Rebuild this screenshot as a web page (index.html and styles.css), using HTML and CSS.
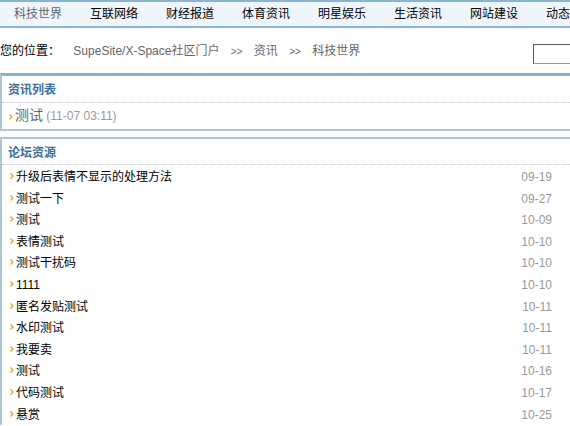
FILE: index.html
```html
<!DOCTYPE html>
<html lang="zh-CN">
<head>
  <meta charset="UTF-8">
  <title>科技世界 - SupeSite/X-Space社区门户</title>
  <link rel="stylesheet" href="styles.css">
</head>
<body>
  <div class="nav">
    <a class="cur" href="#">科技世界</a>
    <a href="#">互联网络</a>
    <a href="#">财经报道</a>
    <a href="#">体育资讯</a>
    <a href="#">明星娱乐</a>
    <a href="#">生活资讯</a>
    <a href="#">网站建设</a>
    <a href="#">动态</a>
  </div>

  <div class="crumb">
    <div class="where">
      <strong>您的位置：</strong>
      <a href="#">SupeSite/X-Space社区门户</a>
      <span class="sep">&gt;&gt;</span>
      <a href="#">资讯</a>
      <span class="sep">&gt;&gt;</span>
      <a href="#">科技世界</a>
    </div>
    <input type="text" class="search">
  </div>

  <div class="box box-news">
    <h3>资讯列表</h3>
    <ul class="newslist">
      <li><a href="#">测试</a> <span class="time">(11-07 03:11)</span></li>
    </ul>
  </div>

  <div class="box box-bbs">
    <h3>论坛资源</h3>
    <ul class="bbslist">
      <li><a href="#">升级后表情不显示的处理方法</a><span class="date">09-19</span></li>
      <li><a href="#">测试一下</a><span class="date">09-27</span></li>
      <li><a href="#">测试</a><span class="date">10-09</span></li>
      <li><a href="#">表情测试</a><span class="date">10-10</span></li>
      <li><a href="#">测试干扰码</a><span class="date">10-10</span></li>
      <li><a href="#">1111</a><span class="date">10-10</span></li>
      <li><a href="#">匿名发贴测试</a><span class="date">10-11</span></li>
      <li><a href="#">水印测试</a><span class="date">10-11</span></li>
      <li><a href="#">我要卖</a><span class="date">10-11</span></li>
      <li><a href="#">测试</a><span class="date">10-16</span></li>
      <li><a href="#">代码测试</a><span class="date">10-17</span></li>
      <li><a href="#">悬赏</a><span class="date">10-25</span></li>
    </ul>
  </div>
</body>
</html>
```

FILE: styles.css
```css
html, body { margin: 0; padding: 0; overflow: hidden; }
body { font: 12px "Liberation Sans", "Noto Sans CJK SC", sans-serif; color: #000; background: #fff; }
a { text-decoration: none; color: #000; }
ul { list-style: none; margin: 0; padding: 0; }

.nav { height: 24px; border-top: 2px solid #8ab4d6; border-bottom: 2px solid #8ab4d6; background: #eef5fd; white-space: nowrap; overflow: hidden; display: flex; }
.nav a { flex: none; padding: 0 14px; line-height: 24px; color: #000; }
.nav a.cur { color: #666; }

.crumb { height: 45px; display: flex; align-items: center; justify-content: space-between; }
.where { color: #666; margin-top: -3px; }
.where strong { color: #000; font-weight: normal; margin-right: 10px; }
.where a { color: #666; }
.where .sep { margin: 0 8px; font-size: 10px; }
.search { width: 40px; height: 18px; margin: 6px -5px 0 0; border: 1px solid #999; border-top-color: #555; border-left-color: #555; padding: 0; }

.box { border-left: 2px solid #aac6d6; background: #fff; }
.box h3 { margin: 0; padding-left: 6px; font-size: 12px; font-weight: bold; color: #3b6f99; height: 26px; line-height: 28px; border-bottom: 1px dotted #c8c8c8; }
.box-news { border-top: 3px solid #87b3d3; border-bottom: 2px solid #aac6d6; }
.box-bbs { margin-top: 6px; border-top: 2px solid #aac6d6; }
.box-bbs h3 { height: 25px; line-height: 28px; }

.newslist li { height: 26px; line-height: 25px; padding-left: 7px; color: #999; }
.newslist li a { font-size: 14px; color: #666; padding-left: 6px; background: url("data:image/svg+xml,%3Csvg xmlns='http://www.w3.org/2000/svg' width='4' height='6'%3E%3Cpath d='M0.5 0.5 L3 3 L0.5 5.5' fill='none' stroke='%23f39800' stroke-width='1.2'/%3E%3C/svg%3E") no-repeat 0 7px; }
.newslist .time { font-size: 12px; }

.bbslist { padding-top: 1px; }
.bbslist li { height: 21.6px; line-height: 23px; padding: 0 18px 0 8px; display: flex; justify-content: space-between; }
.bbslist li a { padding-left: 6px; background: url("data:image/svg+xml,%3Csvg xmlns='http://www.w3.org/2000/svg' width='4' height='6'%3E%3Cpath d='M0.5 0.5 L3 3 L0.5 5.5' fill='none' stroke='%23f39800' stroke-width='1.2'/%3E%3C/svg%3E") no-repeat 0 7px; }
.bbslist .date { color: #999; }
```
